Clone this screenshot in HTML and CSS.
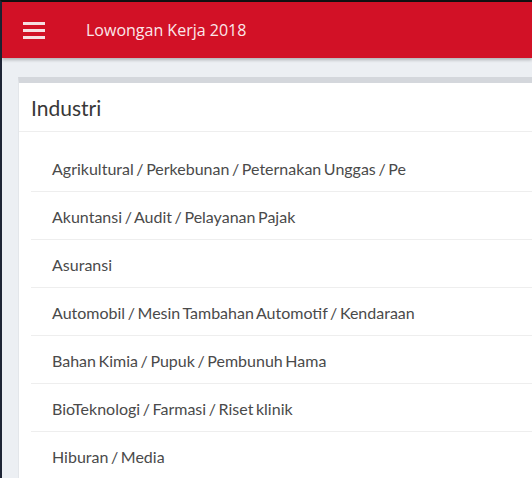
FILE: index.html
```html
<!DOCTYPE html>
<html lang="id">
  <head>
    <meta charset="UTF-8" />
    <meta name="viewport" content="width=device-width, initial-scale=1.0" />
    <title>Lowongan Kerja 2018</title>
    <link rel="stylesheet" href="styles.css">
  </head>
  <body>
    <div class="frame">
      <header class="topbar">
        <button class="menu-btn" aria-label="Menu">
          <span></span><span></span><span></span>
        </button>
        <h1 class="app-title">Lowongan Kerja 2018</h1>
      </header>
      <main class="content">
        <section class="card">
          <h2 class="card-title">Industri</h2>
          <ul class="industry-list">
            <li>Agrikultural / Perkebunan / Peternakan Unggas / Pe</li>
            <li>Akuntansi / Audit / Pelayanan Pajak</li>
            <li>Asuransi</li>
            <li>Automobil / Mesin Tambahan Automotif / Kendaraan</li>
            <li>Bahan Kimia / Pupuk / Pembunuh Hama</li>
            <li>BioTeknologi / Farmasi / Riset klinik</li>
            <li>Hiburan / Media</li>
          </ul>
        </section>
      </main>
    </div>
  </body>
</html>
```

FILE: styles.css
```css
* {
  margin: 0;
  padding: 0;
  box-sizing: border-box;
}
html,
body {
  height: 100%;
  overflow: hidden;
}
body {
  background-color: #eceff3;
  font-family: "Open Sans", "Noto Sans", sans-serif;
  color: #333;
}
.frame {
  height: 100%;
  border-top: 2px solid #111;
  border-left: 2px solid #1e2535;
  background-color: #eceff3;
}
.topbar {
  height: 56px;
  display: flex;
  align-items: center;
  background-color: #d21126;
  box-shadow: 0 2px 3px rgba(0, 0, 0, 0.25);
  position: relative;
}
.menu-btn {
  width: 22px;
  margin-left: 21px;
  display: flex;
  flex-direction: column;
  gap: 4px;
  background: none;
  border: none;
}
.menu-btn span {
  display: block;
  height: 3px;
  background-color: #f6dfe2;
}
.app-title {
  margin-left: 41px;
  font-size: 16px;
  font-weight: normal;
  color: #fbe7ea;
}
.content {
  padding: 19px 0 0 16px;
}
.card {
  background-color: #fff;
  border-top: 6px solid #d4d7dc;
  border-left: 1px solid #e3e6ea;
}
.card-title {
  height: 49px;
  display: flex;
  align-items: center;
  padding-left: 12px;
  font-family: "Lato", sans-serif;
  font-size: 21px;
  font-weight: normal;
  color: #383838;
  border-bottom: 1px solid #eee;
}
.industry-list {
  list-style: none;
  padding-top: 12px;
  margin-left: 12px;
}
.industry-list li {
  height: 48px;
  display: flex;
  align-items: center;
  padding-top: 2px;
  padding-left: 21px;
  font-family: "Lato", sans-serif;
  font-size: 16px;
  word-spacing: -1.5px;
  color: #4a4a4a;
  border-bottom: 1px solid #eee;
  white-space: nowrap;
  overflow: hidden;
}
```
